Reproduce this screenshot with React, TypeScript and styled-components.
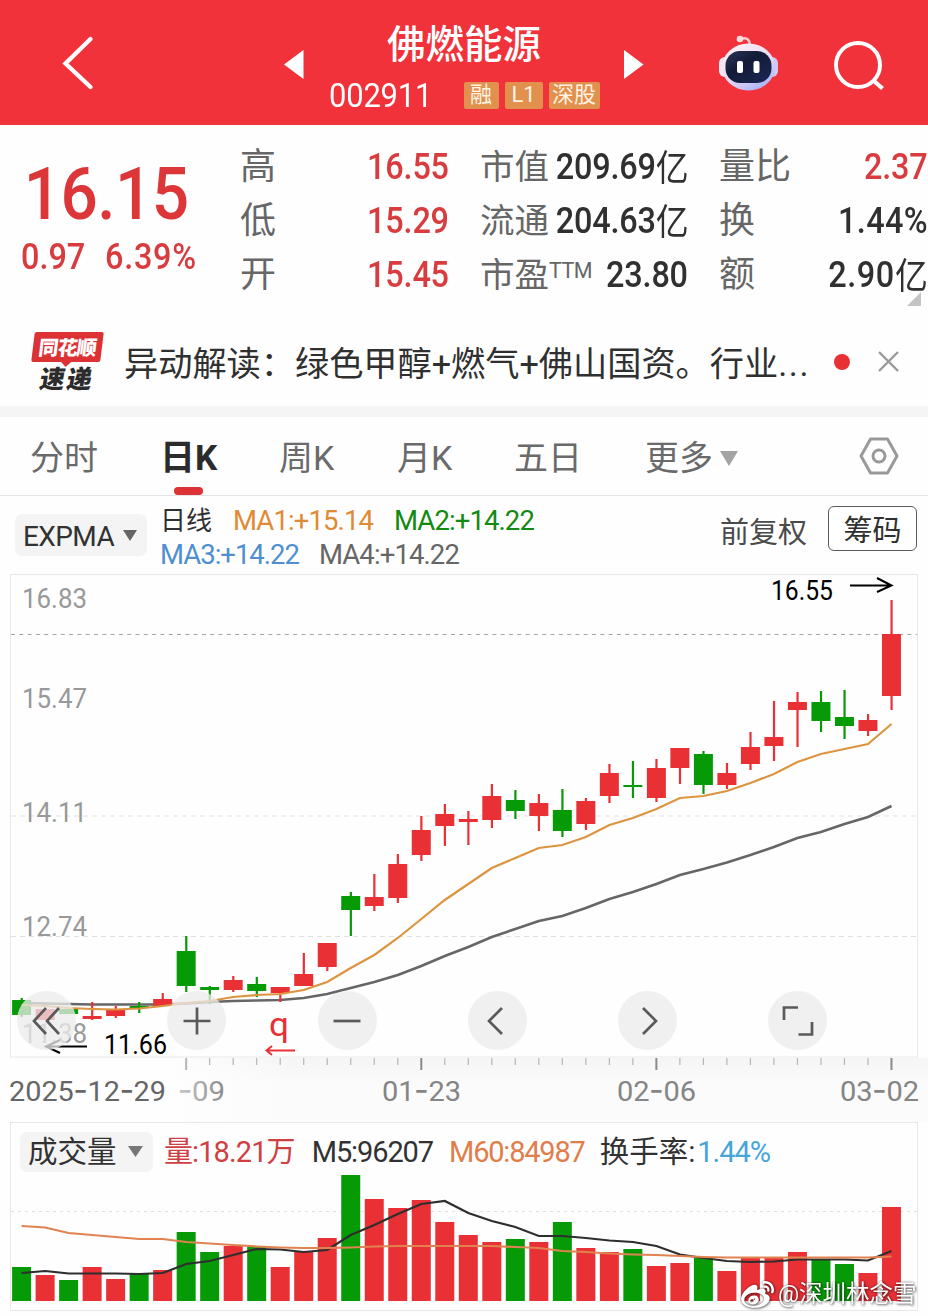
import React from 'react';
import styled, { createGlobalStyle } from 'styled-components';
import { FaWeibo } from 'react-icons/fa';

const RED = '#e93035';
const GREEN = '#069a06';
const FONT = 'Roboto, "Noto Sans CJK SC", sans-serif';

const GlobalStyle = createGlobalStyle`
  * { box-sizing: border-box; }
  body { margin: 0; background: #fefefe; font-family: ${FONT}; }
  svg { display: block; flex: none; }
`;

const Page = styled.main`
  position: relative;
  width: 928px;
  height: 1316px;
  overflow: hidden;
  display: flex;
  flex-direction: column;
  background: #fefefe;
`;

/* ---------- text ---------- */

interface LabelProps {
  $size: number;
  $color?: string;
  $weight?: number;
  $track?: number;
  $drop?: number;
}

const Label = styled.span<LabelProps>`
  font-size: ${(p) => p.$size}px;
  line-height: 1;
  color: ${(p) => p.$color ?? '#323232'};
  font-weight: ${(p) => p.$weight ?? 400};
  letter-spacing: ${(p) => p.$track ?? 0}px;
  padding-top: ${(p) => p.$drop ?? 0}px;
  white-space: nowrap;
`;

/* ---------- header ---------- */

const Header = styled.header`
  height: 125px;
  flex: none;
  display: flex;
  align-items: center;
  padding: 4px 30px 0 62px;
  background: #f2323a;
`;

const BackIcon = styled.svg`
  margin-right: 190px;
  margin-bottom: 3px;
`;

const TitleBlock = styled.div`
  width: 320px;
  flex: none;
  display: flex;
  flex-direction: column;
  align-items: center;
  padding-top: 11px;
`;

const StockName = styled.h1`
  margin: 0;
  font-size: 38.5px;
  line-height: 50px;
  font-weight: 500;
  color: #fff;
`;

const CodeRow = styled.div`
  display: flex;
  align-items: center;
  height: 50px;
  gap: 6px;
  color: #fff;
`;

const Code = styled.span`
  width: 104px;
  font-size: 34px;
  letter-spacing: -0.2px;
  line-height: 1;
  margin-right: 25px;
  transform: scaleX(0.91);
  transform-origin: left;
`;

const Tag = styled.span<{ $width: number }>`
  width: ${(p) => p.$width}px;
  height: 27px;
  line-height: 26px;
  text-align: center;
  font-size: 22px;
  border-radius: 2px;
  background: #e2904d;
  color: #fff3e4;
`;

const RobotIcon = styled.svg`
  margin-left: 74px;
  margin-bottom: 4px;
`;

const SearchIcon = styled.svg`
  margin-left: 55px;
  margin-top: 2px;
`;

/* ---------- quote ---------- */

const Quote = styled.section`
  position: relative;
  height: 185px;
  flex: none;
  display: flex;
`;

const PriceBlock = styled.div`
  width: 240px;
  padding: 33px 0 0 21px;
  display: flex;
  flex-direction: column;
  color: #dc3639;
`;

const Price = styled.div`
  font-size: 73px;
  line-height: 73px;
  font-weight: 500;
  letter-spacing: -0.6px;
  padding-left: 3px;
  transform: scaleX(0.9);
  transform-origin: left;
`;

const Change = styled.div`
  display: flex;
  gap: 22px;
  margin-top: 8px;
  transform: scaleX(0.9);
  transform-origin: left;
`;

const StatColumn = styled.dl<{ $width: number; $gap: number }>`
  margin: 0;
  width: ${(p) => p.$width}px;
  margin-right: ${(p) => p.$gap}px;
  padding-top: 15px;
  display: flex;
  flex-direction: column;
`;

const Stat = styled.div`
  height: 54px;
  display: flex;
  align-items: center;
  justify-content: space-between;
`;

const StatName = styled.dt<{ $size: number }>`
  font-size: ${(p) => p.$size}px;
  line-height: 54px;
  color: #666;
  white-space: nowrap;
  sup {
    font-size: 21.5px;
    line-height: 0;
    vertical-align: 9px;
    letter-spacing: -0.5px;
  }
`;

const StatValue = styled.dd<{ $up?: boolean; $track?: number }>`
  margin: 0 0 0 -20px;
  font-size: 36px;
  line-height: 54px;
  font-weight: 500;
  letter-spacing: ${(p) => p.$track ?? -0.2}px;
  color: ${(p) => (p.$up ? '#d83c3f' : '#303030')};
  white-space: nowrap;
  transform: scaleX(0.9);
  transform-origin: right;
`;

const Unit = styled.span`
  font-size: 36.5px;
  line-height: 1;
  font-weight: 400;
  vertical-align: -2px;
`;

const Corner = styled.svg`
  position: absolute;
  left: 907px;
  top: 167px;
`;

/* ---------- news ---------- */

const News = styled.section`
  height: 107px;
  flex: none;
  display: flex;
  align-items: center;
  padding: 7px 29px 0 30px;
  border-bottom: 11px solid #f5f5f5;
`;

const Brand = styled.div`
  width: 74px;
  height: 60px;
  margin: 0 20px 0 0;
  display: flex;
  flex-direction: column;
  align-items: center;
`;

const BrandTop = styled.div`
  position: relative;
  width: 69px;
  height: 30px;
  border-radius: 2px;
  background: #dc3236;
  transform: skewX(-7deg);
  color: #fff;
  font-size: 20px;
  line-height: 32px;
  font-weight: 900;
  letter-spacing: -0.8px;
  text-align: center;
  &::after {
    content: '';
    position: absolute;
    left: 29px;
    top: 29px;
    border: 6px solid transparent;
    border-top-color: #dc3236;
    border-bottom: 0;
  }
`;

const BrandBottom = styled.div`
  font-size: 25px;
  line-height: 26px;
  margin-top: 5px;
  font-weight: 900;
  color: #2b2b2b;
  letter-spacing: 2px;
  transform: skewX(-10deg);
`;

const Dot = styled.i`
  width: 16px;
  height: 16px;
  border-radius: 50%;
  background: ${RED};
  margin-left: auto;
  margin-right: 28px;
`;

/* ---------- period tabs ---------- */

const Tabs = styled.nav`
  height: 79px;
  flex: none;
  display: flex;
  padding-left: 30px;
  border-bottom: 1px solid #e4e4e4;
`;

const Tab = styled.div<{ $width: number; $active?: boolean }>`
  position: relative;
  width: ${(p) => p.$width}px;
  padding-top: 4px;
  display: flex;
  align-items: center;
  font-size: ${(p) => (p.$active ? 35 : 34)}px;
  line-height: 1;
  color: ${(p) => (p.$active ? '#2b2b2b' : '#6a6a6a')};
  font-weight: ${(p) => (p.$active ? 700 : 400)};
  text-indent: ${(p) => (p.$active ? -2 : 0)}px;
  gap: 7px;
  &::after {
    content: '';
    display: ${(p) => (p.$active ? 'block' : 'none')};
    position: absolute;
    left: 12px;
    bottom: 0;
    width: 29px;
    height: 8px;
    border-radius: 4px;
    background: #dc3236;
  }
`;

const SettingsIcon = styled.svg`
  align-self: center;
  margin-left: auto;
  margin-right: 29px;
`;

/* ---------- indicator bar ---------- */

const IndicatorBar = styled.section`
  height: 78px;
  flex: none;
  display: flex;
  align-items: center;
  padding: 0 11px 0 15px;
`;

const Picker = styled.div<{ $width: number; $height: number }>`
  width: ${(p) => p.$width}px;
  height: ${(p) => p.$height}px;
  border-radius: 7px;
  background: #f4f4f4;
  display: flex;
  align-items: center;
  justify-content: space-between;
  padding: 0 10px 0 8px;
`;

const Averages = styled.div`
  margin: 5px 0 0 13px;
  display: flex;
  flex-direction: column;
`;

const AverageRow = styled.div`
  height: 34px;
  display: flex;
  align-items: center;
`;

const Spacer = styled.i<{ $width: number }>`
  width: ${(p) => p.$width}px;
  flex: none;
`;

const Adjust = styled.div`
  margin-left: auto;
  margin-bottom: 13px;
  display: flex;
  align-items: center;
  gap: 21px;
`;

const ChipButton = styled.button`
  width: 89px;
  height: 45px;
  padding: 4px 0 0;
  border: 1px solid #5c5c5c;
  border-radius: 6px;
  background: #fff;
  font: 400 29px/38px ${FONT};
  color: #303030;
`;

/* ---------- charts ---------- */

const ChartArea = styled.section`
  position: relative;
  height: 548px;
  flex: none;
`;

const Controls = styled.div`
  position: absolute;
  left: 17px;
  top: 417px;
  display: flex;
  gap: 91.3px;
`;

const RoundButton = styled.button`
  width: 59px;
  height: 59px;
  padding: 0;
  border: 0;
  border-radius: 50%;
  background: rgba(235, 235, 235, 0.76);
  display: flex;
  align-items: center;
  justify-content: center;
`;

const VolumePanel = styled.section`
  width: 908px;
  height: 189px;
  margin-left: 10px;
  flex: none;
  border: 1px solid #e8e8e8;
  display: flex;
  flex-direction: column;
`;

const VolumeHeader = styled.div`
  height: 50px;
  display: flex;
  align-items: center;
  padding: 7px 0 0 9px;
`;

const Watermark = styled.div`
  position: absolute;
  left: 741px;
  top: 1278px;
  height: 34px;
  display: flex;
  align-items: center;
  gap: 4px;
  color: #fff;
  font-size: 23.5px;
  line-height: 1;
  filter: drop-shadow(0 0 1px rgba(0, 0, 0, 0.5)) drop-shadow(1px 1px 1px rgba(0, 0, 0, 0.4));
`;

const FIRST_X = 21.6;
const STEP = 23.51;
const xAt = (i: number) => FIRST_X + i * STEP;

// colour, body top, body bottom, wick top, wick bottom, volume bar top
type Candle = ['r' | 'g', number, number, number, number, number];

const candles: Candle[] = [
  ['g', 1000, 1015, 998, 1017, 1267],
  ['r', 1009, 1020, 1009, 1020, 1275],
  ['g', 1009, 1014, 1009, 1014, 1280],
  ['r', 1016, 1019, 1002, 1020, 1267],
  ['r', 1009, 1016, 1006, 1018, 1279],
  ['g', 1006, 1008, 1002, 1013, 1273],
  ['r', 999, 1006, 993, 1006, 1270],
  ['g', 951, 986, 936, 992, 1232],
  ['g', 987, 990, 986, 1004, 1252],
  ['r', 980, 990, 976, 992, 1246],
  ['g', 984, 991, 977, 997, 1247],
  ['r', 987, 993, 987, 1002, 1267],
  ['r', 974, 986, 953, 986, 1251],
  ['r', 943, 967, 943, 971, 1238],
  ['g', 896, 910, 892, 936, 1175],
  ['r', 897, 906, 874, 911, 1199],
  ['r', 864, 898, 854, 903, 1208],
  ['r', 830, 855, 816, 861, 1200],
  ['r', 814, 826, 804, 846, 1222],
  ['r', 819, 822, 811, 845, 1235],
  ['r', 796, 820, 784, 828, 1242],
  ['g', 800, 811, 790, 819, 1239],
  ['r', 803, 816, 794, 831, 1242],
  ['g', 810, 831, 789, 837, 1222],
  ['r', 801, 824, 798, 830, 1248],
  ['r', 773, 796, 764, 803, 1252],
  ['g', 785, 787, 761, 798, 1249],
  ['r', 768, 798, 759, 802, 1266],
  ['r', 748, 768, 748, 784, 1263],
  ['g', 754, 785, 751, 794, 1258],
  ['r', 773, 785, 763, 789, 1271],
  ['r', 747, 764, 732, 770, 1258],
  ['r', 737, 746, 701, 761, 1258],
  ['r', 702, 710, 692, 747, 1252],
  ['g', 702, 721, 691, 732, 1260],
  ['g', 717, 726, 690, 739, 1264],
  ['r', 720, 731, 714, 736, 1273],
  ['r', 634, 696, 600, 710, 1207],
];

const shortAverage = [
  1005, 1006, 1008, 1009, 1009.5, 1008.5, 1006, 1003, 1001, 997, 995, 994, 990, 982, 968, 955, 938, 919, 900, 884,
  868, 858, 848, 845, 837, 825, 818, 809, 798, 796, 791, 783, 774, 762, 754, 749, 744, 724,
];
const longAverage = [
  1003, 1003.5, 1004, 1004.5, 1004.5, 1004.5, 1004.5, 1003.5, 1002, 1001, 1000.5, 1000, 998, 994, 988, 982, 975, 966,
  956, 947, 937, 929, 921, 916, 908, 899, 892, 884, 875, 869, 862.5, 855, 847, 838, 832, 824, 817, 806,
];
const volumeM5 = [
  1273, 1271, 1273.5, 1273.5, 1273.5, 1274, 1273, 1264, 1261, 1255, 1249, 1249.5, 1252, 1250, 1235, 1225, 1214, 1204,
  1201, 1213, 1221, 1227, 1236, 1236, 1238, 1240.5, 1242, 1246, 1254.5, 1258, 1261, 1262, 1261.5, 1259.5, 1259.5,
  1259.5, 1260.5, 1251,
];
const volumeM60 = [
  1226, 1227.5, 1233, 1235, 1237, 1239, 1239, 1242, 1243.5, 1245, 1246.5, 1247.5, 1248, 1248, 1247.5, 1246.5, 1246,
  1246, 1246, 1246, 1246, 1247, 1248, 1251, 1252, 1253.5, 1254.5, 1255, 1256, 1257, 1257.5, 1257.5, 1257.5, 1257.5,
  1257.5, 1257.5, 1257.5, 1256.5,
];

const toPoints = (ys: number[]) => ys.map((y, i) => `${xAt(i).toFixed(1)},${y}`).join(' ');
const fillOf = (c: Candle) => (c[0] === 'r' ? RED : GREEN);

interface ChartTextProps {
  x: number;
  y: number;
  width: number;
  fill: string;
  size?: number;
  children: string;
}

const ChartText = ({ x, y, width, fill, size = 27.5, children }: ChartTextProps) => (
  <text x={x} y={y} fontSize={size} fill={fill} textLength={width} lengthAdjust="spacingAndGlyphs" fontFamily={FONT}>
    {children}
  </text>
);

// Dates use a broader hyphen than the digits' own font has.
const DateText = ({ x, width, fill, children }: Omit<ChartTextProps, 'y' | 'size'>) => (
  <text x={x} y={1101} fontSize={28.5} fill={fill} textLength={width} lengthAdjust="spacingAndGlyphs" fontFamily={FONT}>
    {children.split('-').map((part, i) => (
      <React.Fragment key={i}>
        {i > 0 && (
          <tspan fontFamily="Noto Sans CJK SC" fontSize={39} dy={1}>
            -
          </tspan>
        )}
        {part && <tspan dy={i > 0 ? -1 : 0}>{part}</tspan>}
      </React.Fragment>
    ))}
  </text>
);

const Caret = ({ w, h, color }: { w: number; h: number; color: string }) => (
  <svg width={w} height={h} viewBox="0 0 10 10" preserveAspectRatio="none">
    <path d="M0 0H10L5 10Z" fill={color} />
  </svg>
);

const PriceChart = () => (
  <svg width="928" height="548" viewBox="0 574 928 548">
    <defs>
      <linearGradient id="axisShade" x1="0" y1="0" x2="0" y2="1">
        <stop offset="0" stopColor="#f5f5f5" />
        <stop offset="0.4" stopColor="#fbfbfb" />
        <stop offset="1" stopColor="#fbfbfb" />
      </linearGradient>
      <linearGradient id="axisFade" x1="0" x2="1">
        <stop offset="0" stopColor="#fefefe" />
        <stop offset="1" stopColor="#fefefe" stopOpacity="0" />
      </linearGradient>
      <linearGradient id="dateFade" x1="0" x2="1">
        <stop offset="0" stopColor="#c8c8c8" />
        <stop offset="1" stopColor="#8a8a8a" />
      </linearGradient>
    </defs>
    <rect x="165" y="1058" width="763" height="64" fill="url(#axisShade)" />
    <rect x="164" y="1058" width="130" height="64" fill="url(#axisFade)" />
    <rect x="10.5" y="574.5" width="907" height="482.5" fill="#fefefe" stroke="#e8e8e8" />
    <path d="M11 816H917M11 936.5H917" stroke="#e0e0e0" strokeDasharray="5 4" />
    <path d="M11 634.5H917" stroke="#a5a59c" strokeDasharray="4 4.3" />
    <ChartText x={22} y={608} width={65} fill="#999">16.83</ChartText>
    <ChartText x={22} y={708} width={65} fill="#999">15.47</ChartText>
    <ChartText x={22} y={822} width={65} fill="#999">14.11</ChartText>
    <ChartText x={22} y={936} width={65} fill="#999">12.74</ChartText>
    <ChartText x={22} y={1043} width={65} fill="#999">11.38</ChartText>
    <polyline points={toPoints(longAverage)} fill="none" stroke="#666" strokeWidth="2.6" />
    {candles.map((c, i) => (
      <g key={i} fill={fillOf(c)}>
        <rect x={xAt(i) - 1} y={c[3]} width="2.2" height={c[4] - c[3]} />
        <rect x={xAt(i) - 9.5} y={c[1]} width="19" height={c[2] - c[1]} />
      </g>
    ))}
    <polyline points={toPoints(shortAverage)} fill="none" stroke="#dc9440" strokeWidth="2.2" />
    {candles.map((_, i) =>
      i < 7 ? null : (
        <path
          key={i}
          d={`M${xAt(i)} 1058V${i % 10 === 7 ? 1070 : 1065}`}
          stroke={i % 10 === 7 && i > 7 ? '#8a8a8a' : '#b5b5b5'}
          strokeWidth={i % 10 === 7 ? 2 : 1.2}
        />
      ),
    )}
    <ChartText x={771} y={600} width={62} fill="#000">16.55</ChartText>
    <path d="M850 585.5H891M877 578L891.5 585.5L877 592" fill="none" stroke="#000" strokeWidth="2" />
    <ChartText x={104} y={1054} width={63} fill="#000">11.66</ChartText>
    <path d="M87 1046.500H47M60 1040L46 1046.500L60 1053" fill="none" stroke="#000" strokeWidth="2" />
    <ChartText x={269} y={1036} width={20} fill={RED} size={33}>q</ChartText>
    <path d="M295 1050.500H267M272 1046L266.500 1050.500L272 1055" fill="none" stroke={RED} strokeWidth="2" />
    <DateText x={9} width={157} fill="#666">2025-12-29</DateText>
    <DateText x={178} width={47} fill="url(#dateFade)">-09</DateText>
    <DateText x={382} width={79} fill="#858585">01-23</DateText>
    <DateText x={617} width={79} fill="#858585">02-06</DateText>
    <DateText x={840} width={79} fill="#858585">03-02</DateText>
  </svg>
);

const VolumeChart = () => (
  <svg width="906" height="137" viewBox="11 1173 906 137">
    <path d="M11 1211.500H917" stroke="#e2e2e2" strokeDasharray="3 4" />
    {candles.map((c, i) => (
      <rect key={i} x={xAt(i) - 9.5} y={c[5]} width="19" height={1301 - c[5]} fill={fillOf(c)} />
    ))}
    <polyline points={toPoints(volumeM5)} fill="none" stroke="#2e2e2e" strokeWidth="2.2" />
    <polyline points={toPoints(volumeM60)} fill="none" stroke="#e08350" strokeWidth="2.2" />
  </svg>
);

const controlPaths = [
  'M19 2L7 15L19 28M32 2L20 15L32 28',
  'M20 1.500V28.500M6.500 15H33.500',
  'M6.500 15H33.500',
  'M25 2L12 15L25 28',
  'M15 2L28 15L15 28',
  'M6 14V1.500H20M34 16V28.500H20.500',
];

interface StatItem {
  name: React.ReactNode;
  value: string;
  unit?: string;
  up?: boolean;
  track?: number;
}

const StatGroup = ({ items, width, gap, size }: { items: StatItem[]; width: number; gap: number; size: number }) => (
  <StatColumn $width={width} $gap={gap}>
    {items.map((s) => (
      <Stat key={s.value}>
        <StatName $size={size}>{s.name}</StatName>
        <StatValue $up={s.up} $track={s.track}>
          {s.value}
          {s.unit && <Unit>{s.unit}</Unit>}
        </StatValue>
      </Stat>
    ))}
  </StatColumn>
);

export default function App() {
  return (
    <Page>
      <GlobalStyle />
      <Header>
        <BackIcon width="32" height="56" viewBox="0 0 32 56">
          <path d="M28.500 4L3.500 28.500L28.500 52" fill="none" stroke="#fff" strokeWidth="4.300" strokeLinecap="round" />
        </BackIcon>
        <svg width="20" height="29" viewBox="0 0 20 29">
          <path d="M0 14.500L19.500 0V29Z" fill="#fff" />
        </svg>
        <TitleBlock>
          <StockName>佛燃能源</StockName>
          <CodeRow>
            <Code>002911</Code>
            <Tag $width={35}>融</Tag>
            <Tag $width={38}>L1</Tag>
            <Tag $width={51}>深股</Tag>
          </CodeRow>
        </TitleBlock>
        <svg width="20" height="29" viewBox="0 0 20 29">
          <path d="M19.500 14.500L0 0V29Z" fill="#fff" />
        </svg>
        <RobotIcon width="61" height="58" viewBox="0 0 61 58">
          <defs>
            <linearGradient id="shell" x1="0.1" y1="0" x2="0.7" y2="1">
              <stop offset="0" stopColor="#fff3f4" />
              <stop offset="0.6" stopColor="#e9d9f4" />
              <stop offset="1" stopColor="#aab2f4" />
            </linearGradient>
            <linearGradient id="visor" x1="0" y1="0" x2="1" y2="1">
              <stop offset="0" stopColor="#2c3556" />
              <stop offset="0.4" stopColor="#131b36" />
              <stop offset="1" stopColor="#1b2858" />
            </linearGradient>
          </defs>
          <path d="M23 5Q31 2 32 11" fill="none" stroke="#f8c9cc" strokeWidth="2.400" />
          <circle cx="22" cy="5" r="3.300" fill="#fbdcdd" />
          <rect x="1" y="23" width="12" height="20" rx="6" fill="#f6e6f1" />
          <rect x="48" y="23" width="12" height="20" rx="6" fill="#cfc9f5" />
          <ellipse cx="30.500" cy="33" rx="26.500" ry="23.500" fill="url(#shell)" />
          <rect x="7.500" y="17" width="46" height="32" rx="14.500" fill="url(#visor)" />
          <rect x="19" y="27" width="6" height="12" rx="2" fill="#fff" />
          <rect x="35.500" y="27" width="6" height="12" rx="2" fill="#fff" />
        </RobotIcon>
        <SearchIcon width="52" height="50" viewBox="0 0 52 50">
          <circle cx="24" cy="24" r="22" fill="none" stroke="#fff" strokeWidth="4" />
          <path d="M40 40L48.500 47.500" stroke="#fff" strokeWidth="4.300" />
        </SearchIcon>
      </Header>

      <Quote>
        <PriceBlock>
          <Price>16.15</Price>
          <Change>
            <Label $size={36} $weight={500} $color="#d83c3f">0.97</Label>
            <Label $size={36} $weight={500} $track={0.8} $color="#d83c3f">6.39%</Label>
          </Change>
        </PriceBlock>
        <StatGroup
          width={209}
          gap={31}
          size={36}
          items={[
            { name: '高', value: '16.55', up: true },
            { name: '低', value: '15.29', up: true },
            { name: '开', value: '15.45', up: true },
          ]}
        />
        <StatGroup
          width={208}
          gap={31}
          size={34.5}
          items={[
            { name: '市值', value: '209.69', unit: '亿' },
            { name: '流通', value: '204.63', unit: '亿' },
            { name: <>市盈<sup>TTM</sup></>, value: '23.80' },
          ]}
        />
        <StatGroup
          width={209}
          gap={0}
          size={36}
          items={[
            { name: '量比', value: '2.37', up: true },
            { name: '换', value: '1.44%', track: 0.4 },
            { name: '额', value: '2.90', unit: '亿', track: 0.7 },
          ]}
        />
        <Corner width="14" height="14" viewBox="0 0 14 14">
          <path d="M14 0V14H0Z" fill="#c4c4c4" />
        </Corner>
      </Quote>

      <News>
        <Brand>
          <BrandTop>同花顺</BrandTop>
          <BrandBottom>速递</BrandBottom>
        </Brand>
        <Label $size={34.2} $color="#303030" $drop={5}>
          异动解读：绿色甲醇+燃气+佛山国资。行业
          <Label $size={34.2} $track={1.6}>...</Label>
        </Label>
        <Dot />
        <svg width="21" height="21" viewBox="0 0 21 21">
          <path d="M1 1L20 20M20 1L1 20" stroke="#999" strokeWidth="2.400" />
        </svg>
      </News>

      <Tabs>
        <Tab $width={132}>分时</Tab>
        <Tab $width={117} $active>日K</Tab>
        <Tab $width={118}>周K</Tab>
        <Tab $width={117}>月K</Tab>
        <Tab $width={131}>五日</Tab>
        <Tab $width={110}>
          更多
          <Caret w={18} h={15} color="#a3a3a3" />
        </Tab>
        <SettingsIcon width="40" height="38" viewBox="0 0 40 38" fill="none" stroke="#999" strokeWidth="3">
          <path d="M11.500 2H28.500L38 19L28.500 36H11.500L2 19Z" strokeLinejoin="round" />
          <circle cx="20" cy="19" r="6" />
        </SettingsIcon>
      </Tabs>

      <IndicatorBar>
        <Picker $width={132} $height={42}>
          <Label $size={28} $track={-0.6} $drop={3}>EXPMA</Label>
          <Caret w={14} h={11} color="#666" />
        </Picker>
        <Averages>
          <AverageRow>
            <Label $size={26} $color="#303030">日线</Label>
            <Spacer $width={21} />
            <Label $size={27.5} $track={-0.9} $color="#e08a35">MA1:+15.14</Label>
            <Spacer $width={21} />
            <Label $size={27.5} $track={-0.9} $color="#128a12">MA2:+14.22</Label>
          </AverageRow>
          <AverageRow>
            <Label $size={27.5} $track={-1} $color="#4f8fd0">MA3:+14.22</Label>
            <Spacer $width={20} />
            <Label $size={27.5} $track={-0.9} $color="#666">MA4:+14.22</Label>
          </AverageRow>
        </Averages>
        <Adjust>
          <Label $size={29} $color="#4a4a4a" $drop={10}>前复权</Label>
          <ChipButton>筹码</ChipButton>
        </Adjust>
      </IndicatorBar>

      <ChartArea>
        <PriceChart />
        <Controls>
          {controlPaths.map((d) => (
            <RoundButton key={d}>
              <svg width="40" height="30" viewBox="0 0 40 30">
                <path d={d} fill="none" stroke="#5a5a5a" strokeWidth="2.700" />
              </svg>
            </RoundButton>
          ))}
        </Controls>
      </ChartArea>

      <VolumePanel>
        <VolumeHeader>
          <Picker $width={133} $height={40}>
            <Label $size={29.5} $drop={3}>成交量</Label>
            <Caret w={15} h={11} color="#777" />
          </Picker>
          <Spacer $width={11} />
          <Label $size={29} $track={-0.9} $drop={2} $color="#cf4043">量:18.21万</Label>
          <Spacer $width={17} />
          <Label $size={29} $track={-1.1} $drop={2}>M5:96207</Label>
          <Spacer $width={16} />
          <Label $size={29} $track={-1.2} $drop={2} $color="#e07d4a">M60:84987</Label>
          <Spacer $width={15} />
          <Label $size={29.5} $drop={3}>换手率:</Label>
          <Spacer $width={2} />
          <Label $size={29} $track={-1} $drop={2} $color="#45a5d8">1.44%</Label>
        </VolumeHeader>
        <VolumeChart />
      </VolumePanel>

      <Watermark>
        <FaWeibo size={33} />
        @深圳林念雪
      </Watermark>
    </Page>
  );
}
